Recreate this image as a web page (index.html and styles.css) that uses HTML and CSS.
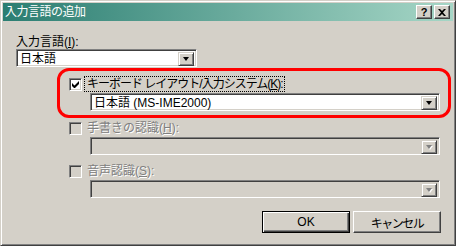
FILE: index.html
```html
<!DOCTYPE html>
<html lang="ja">
<head>
    <meta charset="UTF-8">
    <title>入力言語の追加</title>
    <link rel="stylesheet" href="styles.css">
</head>
<body>
    <div class="dialog">
        <div class="titlebar">
            <span class="title">入力言語の追加</span>
            <div class="title-btns">
                <span class="tbtn help">?</span>
                <span class="tbtn">
                    <svg width="8" height="7" viewBox="0 0 8 7">
                        <path d="M0 0h2l2 2 2-2h2L5 3.5 8 7H6L4 5 2 7H0l3-3.5z" fill="#000"/>
                    </svg>
                </span>
            </div>
        </div>

        <div class="content">
            <div class="label">入力言語(<u>I</u>):</div>
            <div class="combo combo-lang">
                <span class="value">日本語</span>
                <span class="drop"><i class="arrow"></i></span>
            </div>

            <!-- grupo resaltado en rojo -->
            <div class="group highlight">
                <div class="check-row">
                    <span class="checkbox">
                        <svg width="7" height="7" viewBox="0 0 7 7">
                            <path d="M0 2v3l2 2h1l4-4V0L2.5 4.5z" fill="#000"/>
                        </svg>
                    </span>
                    <span class="check-label focus">キーボード レイアウト/入力システム(<u>K</u>):</span>
                </div>
                <div class="combo">
                    <span class="value">日本語 (MS-IME2000)</span>
                    <span class="drop"><i class="arrow"></i></span>
                </div>
            </div>

            <div class="group disabled">
                <div class="check-row">
                    <span class="checkbox"></span>
                    <span class="check-label">手書きの認識(<u>H</u>):</span>
                </div>
                <div class="combo">
                    <span class="value"></span>
                    <span class="drop"><i class="arrow"></i></span>
                </div>
            </div>

            <div class="group disabled">
                <div class="check-row">
                    <span class="checkbox"></span>
                    <span class="check-label">音声認識(<u>S</u>):</span>
                </div>
                <div class="combo">
                    <span class="value"></span>
                    <span class="drop"><i class="arrow"></i></span>
                </div>
            </div>

            <div class="buttons">
                <button class="btn default">OK</button>
                <button class="btn kana">キャンセル</button>
            </div>
        </div>
    </div>
</body>
</html>
```

FILE: styles.css
```css
:root {
    --face: #d4d0c8;
    --shadow: #808080;
    --dark: #404040;
    --light: #ffffff;
    --rojo: #ff0000;
}

* {
    margin: 0;
    padding: 0;
    box-sizing: border-box;
}

body {
    font-family: "Liberation Sans", "Noto Sans CJK JP", sans-serif;
    font-size: 12px;
    color: #000;
    background: var(--face);
}

.dialog {
    width: 456px;
    height: 246px;
    background: var(--face);
    border: 1px solid;
    border-color: var(--face) var(--dark) var(--dark) var(--face);
    box-shadow: inset 1px 1px var(--light), inset -1px -1px var(--shadow);
    padding: 2px;
}

/* barra de titulo */
.titlebar {
    height: 18px;
    display: flex;
    align-items: center;
    justify-content: space-between;
    padding: 0 3px 0 2px;
    background: linear-gradient(to right, #2b7e72, #a6d6c6);
}

.title {
    color: #fff;
    font-size: 12px;
    line-height: 14px;
    letter-spacing: -0.5px;
}

.title-btns {
    display: flex;
    gap: 2px;
}

.tbtn {
    width: 16px;
    height: 14px;
    display: flex;
    align-items: center;
    justify-content: center;
    background: var(--face);
    border: 1px solid;
    border-color: var(--light) var(--dark) var(--dark) var(--light);
    box-shadow: inset -1px -1px var(--shadow);
}

.tbtn.help {
    font-weight: bold;
    font-size: 11px;
    line-height: 12px;
}

/* contenido */
.content {
    padding: 14px 12px 0 13px;
}

.label {
    line-height: 14px;
}

.combo {
    height: 18px;
    display: flex;
    background: #fff;
    border: 1px solid;
    border-color: var(--shadow) var(--light) var(--light) var(--shadow);
    box-shadow: inset 1px 1px var(--dark), inset -1px -1px var(--face);
    padding: 2px;
}

.combo-lang {
    width: 181px;
}

.value {
    flex: 1;
    line-height: 14px;
    padding-left: 1px;
    white-space: nowrap;
}

.drop {
    width: 16px;
    height: 14px;
    display: flex;
    align-items: center;
    justify-content: center;
    background: var(--face);
    border: 1px solid;
    border-color: var(--face) var(--dark) var(--dark) var(--face);
    box-shadow: inset 1px 1px var(--light), inset -1px -1px var(--shadow);
}

.arrow {
    display: block;
    width: 1px;
    height: 0;
    border-left: 3px solid transparent;
    border-right: 3px solid transparent;
    border-top: 4px solid #000;
}

/* grupos */
.group {
    margin: 0 -10px 0 41px;
    border: 3px solid transparent;
    padding: 0 8px 3px 9px;
}

.group.highlight {
    margin-top: 1px;
    border-color: var(--rojo);
    border-radius: 12px;
    padding: 6px 8px 4px 9px;
}

.check-row {
    display: flex;
    align-items: center;
    height: 14px;
}

.checkbox {
    width: 13px;
    height: 13px;
    display: flex;
    align-items: center;
    justify-content: center;
    background: #fff;
    border: 1px solid;
    border-color: var(--shadow) var(--light) var(--light) var(--shadow);
    box-shadow: inset 1px 1px var(--dark), inset -1px -1px var(--face);
}

.check-label {
    margin-left: 3px;
    padding: 0 1px 0 2px;
    line-height: 14px;
    white-space: nowrap;
}

.check-label.focus {
    outline: 1px dotted #000;
    letter-spacing: -1px;
}

.group .combo {
    margin: 2px 0 0 21px;
}

.disabled .check-label {
    color: var(--shadow);
    text-shadow: 1px 1px var(--light);
}

.disabled .checkbox,
.disabled .combo {
    background: var(--face);
}

.disabled .arrow {
    border-top-color: var(--shadow);
    filter: drop-shadow(1px 1px 0 var(--light));
}

/* botones */
.buttons {
    display: flex;
    justify-content: flex-end;
    gap: 3px;
    margin-top: 7px;
}

.btn {
    width: 88px;
    height: 22px;
    font-family: inherit;
    font-size: 12px;
    color: #000;
    background: var(--face);
    border: 1px solid;
    border-color: var(--light) var(--dark) var(--dark) var(--light);
    box-shadow: inset -1px -1px var(--shadow);
}

.btn.kana {
    letter-spacing: -1.5px;
}

.btn.default {
    border-color: #000;
    box-shadow: inset 1px 1px var(--light), inset -1px -1px var(--dark), inset -2px -2px var(--shadow);
}
```
